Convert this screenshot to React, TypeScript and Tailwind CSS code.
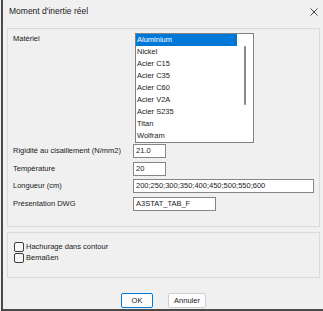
import React from "react";

const items = ["Aluminium", "Nickel", "Acier C15", "Acier C35", "Acier C60", "Acier V2A", "Acier S235", "Titan", "Wolfram"];

function Field({ label, value, w, mt }: { label: string; value: string; w: string; mt: string }) {
  return (
    <div className={`flex items-center h-[14px] ${mt}`}>
      <div className="w-[120px] leading-none">{label}</div>
      <div className={`${w} h-[14px] border border-[#858585] bg-white flex items-center pl-[2px] leading-none`}>{value}</div>
    </div>
  );
}

function Check({ label }: { label: string }) {
  return (
    <div className="flex items-center h-[11px]">
      <div className="w-[10px] h-[10px] border border-[#3c3c3c] rounded-[2px] bg-[#f8f8f8]" />
      <div className="ml-[2px] leading-none">{label}</div>
    </div>
  );
}

export default function App() {
  return (
    <div
      className="w-[323px] h-[311px] bg-[#f0f0f0] pl-px flex text-[#1a1a1a] text-[7.5px]"
      style={{ fontFamily: '"Liberation Sans", Arial, sans-serif' }}
    >
      <div className="flex-1 border-l-2 border-b-2 border-[#4a4a4a] flex flex-col">
        <div className="h-[22px] flex items-center justify-between pl-[6px] pr-[5px]">
          <div className="text-[8.5px] leading-none">Moment d'inertie réel</div>
          <svg width="8" height="8" viewBox="0 0 8 8" className="mt-[1px]">
            <path d="M0.5 0.5 L7.5 7.5 M7.5 0.5 L0.5 7.5" stroke="#333" strokeWidth="0.9" />
          </svg>
        </div>
        <div className="ml-[4px] w-[313px] h-[199px] mt-[6px] border border-[#dadada] pt-[4px] pl-[5px]">
          <div className="flex">
            <div className="w-[122px] pt-[2px] leading-none">Matériel</div>
            <div className="w-[119px] h-[110px] border border-[#828282] bg-white flex">
              <div className="w-[101px] flex flex-col">
                {items.map((it, i) => (
                  <div
                    key={it}
                    className={`h-[12px] flex items-center pl-[1px] leading-none ${i === 0 ? "bg-[#0078d7] text-white" : ""}`}
                  >
                    {it}
                  </div>
                ))}
              </div>
              <div className="flex-1 flex justify-center pt-[12px]">
                <div className="w-[2px] h-[59px] rounded-full bg-[#8a8a8a]" />
              </div>
            </div>
          </div>
          <Field label="Rigidité au cisaillement (N/mm2)" value="21.0" w="w-[33px]" mt="mt-[1px]" />
          <Field label="Température" value="20" w="w-[33px]" mt="mt-[4px]" />
          <Field label="Longueur (cm)" value="200;250;300;350;400;450;500;550;600" w="w-[181px]" mt="mt-[3px]" />
          <Field label="Présentation DWG" value="A3STAT_TAB_F" w="w-[83px]" mt="mt-[4px]" />
        </div>
        <div className="ml-[4px] w-[313px] h-[46px] mt-[5px] border border-[#dadada] pt-[8px] pl-[6px]">
          <Check label="Hachurage dans contour" />
          <Check label="Bemaßen" />
        </div>
        <div className="flex mt-[15px] pl-[118px] gap-[15px]">
          <div className="w-[32px] h-[15px] border border-[#0078d7] rounded-[2px] bg-[#fdfdfd] flex items-center justify-center leading-none">
            OK
          </div>
          <div className="w-[38px] h-[15px] border border-[#d0d0d0] rounded-[2px] bg-[#fdfdfd] flex items-center justify-center leading-none">
            Annuler
          </div>
        </div>
      </div>
    </div>
  );
}
